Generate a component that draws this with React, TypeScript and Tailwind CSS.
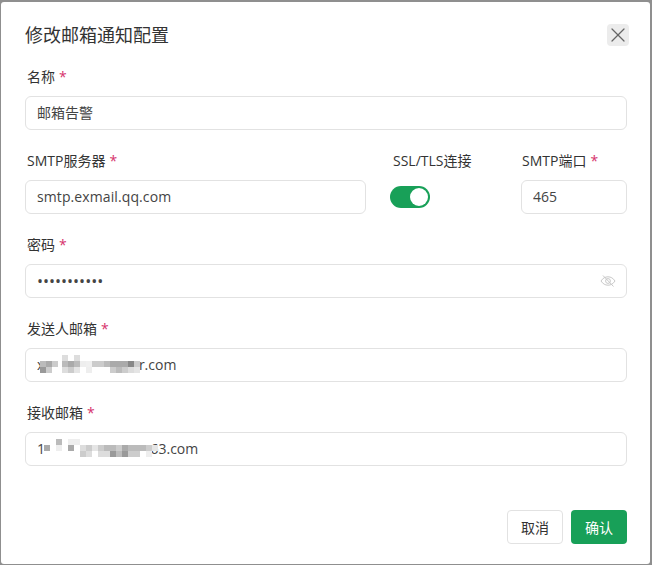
import React from 'react';
import { X } from 'lucide-react';

const FONT = "font-['Open_Sans','Noto_Sans_CJK_SC',sans-serif]";

function Label({ text, required = true }: { text: string; required?: boolean }) {
  return (
    <div className="h-[20px] mb-[9px] pl-[2px] text-[14px] leading-[20px] text-[#333]">
      {text}
      {required && <span className="ml-[4px] text-[#d6336c]">*</span>}
    </div>
  );
}

function Input({ value, type = 'text', wide = false }: { value: string; type?: string; wide?: boolean }) {
  return (
    <input
      readOnly
      type={type}
      value={value}
      className={`block w-full h-[34px] px-[11px] rounded-[6px] border border-[#e2e2e2] bg-white text-[#444] outline-none ${type === 'password' ? 'text-[16px]' : 'text-[14px] pb-[2px]'} ${wide ? 'tracking-[0.1px]' : ''}`}
    />
  );
}

// mosaic blocks hiding the address, [x, y, grey]
const SENDER_MOSAIC: [number, number, string][] = [
  [22, 0, '#ddd'], [34, 0, '#ddd'],
  [0, 6, '#bbb'], [6, 6, '#aaa'], [12, 6, '#ccc'], [22, 6, '#bbb'], [28, 6, '#aaa'], [34, 6, '#bbb'], [40, 6, '#eee'],
  [46, 6, '#f0f0f0'], [52, 6, '#ccc'], [58, 6, '#ccc'], [64, 6, '#bbb'], [70, 6, '#aaa'], [76, 6, '#aaa'], [82, 6, '#aaa'],
  [88, 6, '#888'], [94, 6, '#ccc'],
  [0, 12, '#999'], [6, 12, '#ccc'], [22, 12, '#ddd'], [28, 12, '#ccc'], [34, 12, '#e5e5e5'], [46, 12, '#eee'],
  [70, 12, '#ccc'], [76, 12, '#bbb'], [82, 12, '#ccc'], [88, 12, '#ddd'], [94, 12, '#e5e5e5'],
];
const RECEIVER_MOSAIC: [number, number, string][] = [
  [12, 0, '#bbb'], [24, 0, '#eee'], [30, 0, '#eee'],
  [0, 6, '#aaa'], [12, 6, '#eee'], [24, 6, '#aaa'], [36, 6, '#ddd'], [42, 6, '#ccc'], [48, 6, '#e5e5e5'], [54, 6, '#ccc'], [60, 6, '#bbb'],
  [66, 6, '#bbb'], [72, 6, '#ccc'], [78, 6, '#aaa'], [84, 6, '#bbb'], [90, 6, '#bbb'], [96, 6, '#bbb'], [102, 6, '#ccc'], [108, 6, '#e5e5e5'],
  [36, 12, '#ccc'], [42, 12, '#ddd'], [54, 12, '#ddd'], [60, 12, '#ddd'], [66, 12, '#999'], [72, 12, '#bbb'],
  [78, 12, '#999'], [84, 12, '#ccc'], [90, 12, '#ccc'], [102, 12, '#eee'],
];

function MosaicField({ value, blocks, left }: { value: string; blocks: [number, number, string][]; left: number }) {
  return (
    <div className="relative">
      <Input value={value} />
      <svg className="absolute top-[7px] left-0 overflow-visible" style={{ marginLeft: left }} width="110" height="18">
        {blocks.map(([x, y, c], i) => (
          <rect key={i} x={x} y={y} width="6" height="6" fill={c} />
        ))}
      </svg>
    </div>
  );
}

function HiddenEye() {
  return (
    <svg
      className="absolute right-[11px] top-[9px] text-[#c8c8c8]"
      width="16"
      height="16"
      viewBox="0 0 16 16"
      fill="none"
      stroke="currentColor"
      strokeWidth="1"
    >
      <path d="M1 8c1.8-2.8 4.2-4.2 7-4.2S13.200 5.200 15 8c-1.800 2.800-4.200 4.200-7 4.200S2.800 10.800 1 8z" />
      <circle cx="8" cy="8" r="2.400" />
      <path d="M3 2.500l10.500 11" />
    </svg>
  );
}

export default function App() {
  return (
    <div className={`${FONT} w-[652px] h-[565px] bg-[#8f8f8f] pt-[2px] pl-[1px] pr-[2px] pb-[1px]`}>
      <div className="h-full bg-white rounded-[3px] pl-[24px] pr-[23px] flex flex-col">
        <div className="h-[65px] flex items-center justify-between">
          <span className="text-[18px] leading-[26px] text-[#333]">修改邮箱通知配置</span>
          <button className="w-[22px] h-[22px] mr-[-2px] rounded-[4px] bg-[#ececec] flex items-center justify-center text-[#666]">
            <X size={24} strokeWidth={1.25} className="shrink-0" />
          </button>
        </div>

        <div className="flex flex-col gap-[21px]">
          <div>
            <Label text="名称" />
            <Input value="邮箱告警" />
          </div>

          <div className="flex">
            <div className="w-[341px]">
              <Label text="SMTP服务器" />
              <Input value="smtp.exmail.qq.com" wide />
            </div>
            <div className="w-[155px] pl-[27px]">
              <div className="ml-[-2px]">
                <Label text="SSL/TLS连接" required={false} />
              </div>
              <div className="mt-[15px] ml-[-3px] w-[40px] h-[22px] rounded-full bg-[#18a058] flex items-center justify-end pr-[2px]">
                <div className="w-[18px] h-[18px] rounded-full bg-white" />
              </div>
            </div>
            <div className="w-[106px]">
              <div className="ml-[-1px]">
                <Label text="SMTP端口" />
              </div>
              <Input value="465" />
            </div>
          </div>

          <div>
            <Label text="密码" />
            <div className="relative">
              <Input type="password" value="12345678901" />
              <HiddenEye />
            </div>
          </div>

          <div>
            <Label text="发送人邮箱" />
            <MosaicField value="x                          r.com" blocks={SENDER_MOSAIC} left={15} />
          </div>

          <div>
            <Label text="接收邮箱" />
            <MosaicField value="1                             63.com" blocks={RECEIVER_MOSAIC} left={19} />
          </div>
        </div>

        <div className="mt-[44px] flex justify-end gap-[8px]">
          <button className="w-[56px] h-[34px] rounded-[4px] border border-[#e2e2e2] bg-white text-[14px] text-[#333]">取消</button>
          <button className="w-[56px] h-[34px] rounded-[4px] bg-[#18a058] text-[14px] text-white">确认</button>
        </div>
      </div>
    </div>
  );
}
